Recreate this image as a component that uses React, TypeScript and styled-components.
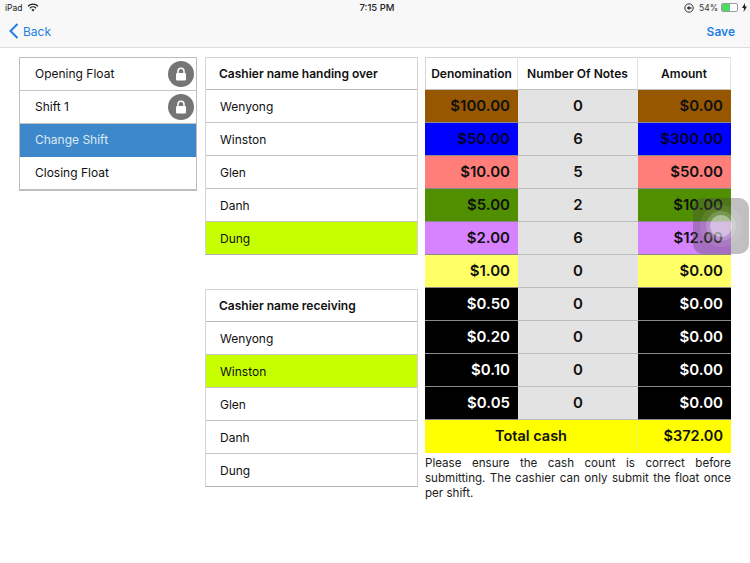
import React from 'react';
import styled, { createGlobalStyle } from 'styled-components';

const GlobalStyle = createGlobalStyle`
  html, body {
    margin: 0;
    padding: 0;
    background: #fff;
    font-family: Inter, "Liberation Sans", sans-serif;
    color: #111;
  }
`;

const denominations = [
  { value: '$100.00', notes: '0', amount: '$0.00', bg: '#975700', fg: '#111' },
  { value: '$50.00', notes: '6', amount: '$300.00', bg: '#0000ff', fg: '#00002e' },
  { value: '$10.00', notes: '5', amount: '$50.00', bg: '#ff7e79', fg: '#111' },
  { value: '$5.00', notes: '2', amount: '$10.00', bg: '#4f8f00', fg: '#111' },
  { value: '$2.00', notes: '6', amount: '$12.00', bg: '#d783ff', fg: '#111' },
  { value: '$1.00', notes: '0', amount: '$0.00', bg: '#ffff66', fg: '#111' },
  { value: '$0.50', notes: '0', amount: '$0.00', bg: '#000', fg: '#fff' },
  { value: '$0.20', notes: '0', amount: '$0.00', bg: '#000', fg: '#fff' },
  { value: '$0.10', notes: '0', amount: '$0.00', bg: '#000', fg: '#fff' },
  { value: '$0.05', notes: '0', amount: '$0.00', bg: '#000', fg: '#fff' },
];

const cashiers = ['Wenyong', 'Winston', 'Glen', 'Danh', 'Dung'];

const LockIcon = () => (
  <svg width="12" height="14" viewBox="0 0 12 14">
    <path d="M3 6.5 V4.2 A3 3 0 0 1 9 4.2 V6.5" fill="none" stroke="#fff" strokeWidth="1.5" />
    <rect x="1" y="6" width="10" height="7.5" rx="1.2" fill="#fff" />
  </svg>
);

const CashierList = ({ title, selected }: { title: string; selected: string }) => (
  <Div_List>
    <Div_ListTitle>{title}</Div_ListTitle>
    {cashiers.map((name) => (
      <Div_CashierRow key={name} $selected={name === selected}>
        {name}
      </Div_CashierRow>
    ))}
  </Div_List>
);

export default function App() {
  return (
    <Div_Page>
      <GlobalStyle />
      <Div_Header>
        <Div_Status>
          <Span_StatusSide>
            iPad
            <svg width="12" height="9" viewBox="0 0 12 9">
              <path d="M6 8.6 L4.4 6.8 A2.4 2.4 0 0 1 7.6 6.8 Z" fill="#222" />
              <path d="M2.9 5.2 A4.5 4.5 0 0 1 9.1 5.2" fill="none" stroke="#222" strokeWidth="1.2" />
              <path d="M1 3.2 A7.2 7.2 0 0 1 11 3.2" fill="none" stroke="#222" strokeWidth="1.2" />
            </svg>
          </Span_StatusSide>
          <Span_Time>7:15 PM</Span_Time>
          <Span_StatusSide>
            <svg width="10" height="10" viewBox="0 0 10 10">
              <circle cx="5" cy="5" r="4.2" fill="none" stroke="#333" strokeWidth="1" />
              <path d="M2.6 5 L5.4 2.8 V4.2 H7.6 V5.8 H5.4 V7.2 Z" fill="#333" />
            </svg>
            <Span_Percent>54%</Span_Percent>
            <Div_Battery>
              <Div_BatteryFill style={{ width: '54%' }} />
            </Div_Battery>
            <svg width="5" height="9" viewBox="0 0 5 9">
              <path d="M3 0 L0 5 H2 L1.6 9 L5 3.6 H3 Z" fill="#222" />
            </svg>
          </Span_StatusSide>
        </Div_Status>
        <Div_Nav>
          <Button_Nav type="button">
            <svg width="10" height="16" viewBox="0 0 10 16">
              <path d="M8.5 1 L1.5 8 L8.5 15" fill="none" stroke="#1f7fe6" strokeWidth="2" />
            </svg>
            <Span_BackLabel>Back</Span_BackLabel>
          </Button_Nav>
          <Button_Nav type="button" $bold>
            Save
          </Button_Nav>
        </Div_Nav>
      </Div_Header>

      <Div_Content>
        <Div_ShiftList>
          <Div_ShiftRow>
            Opening Float
            <Div_LockBadge>
              <LockIcon />
            </Div_LockBadge>
          </Div_ShiftRow>
          <Div_ShiftRow>
            Shift 1
            <Div_LockBadge>
              <LockIcon />
            </Div_LockBadge>
          </Div_ShiftRow>
          <Div_ShiftRow $active>Change Shift</Div_ShiftRow>
          <Div_ShiftRow>Closing Float</Div_ShiftRow>
        </Div_ShiftList>

        <Div_CashierColumn>
          <CashierList title="Cashier name handing over" selected="Dung" />
          <CashierList title="Cashier name receiving" selected="Winston" />
        </Div_CashierColumn>

        <Div_TableColumn>
          <Div_Table>
            <Div_HeadCell>Denomination</Div_HeadCell>
            <Div_HeadCell>Number Of Notes</Div_HeadCell>
            <Div_HeadCell>Amount</Div_HeadCell>
            {denominations.map((d) => (
              <React.Fragment key={d.value}>
                <Div_MoneyCell $bg={d.bg} $fg={d.fg}>{d.value}</Div_MoneyCell>
                <Div_NotesCell>{d.notes}</Div_NotesCell>
                <Div_MoneyCell $bg={d.bg} $fg={d.fg}>{d.amount}</Div_MoneyCell>
              </React.Fragment>
            ))}
            <Div_TotalLabel>Total cash</Div_TotalLabel>
            <Div_TotalValue>$372.00</Div_TotalValue>
          </Div_Table>
          <P_Note>
            Please ensure the cash count is correct before submitting. The cashier can only submit
            the float once per shift.
          </P_Note>
        </Div_TableColumn>
      </Div_Content>

      <Div_AssistiveTouch>
        <Div_TouchHalo>
          <Div_TouchRing>
            <Div_TouchDot />
          </Div_TouchRing>
        </Div_TouchHalo>
      </Div_AssistiveTouch>
    </Div_Page>
  );
}

const Div_Page = styled.div`
  position: relative;
  width: 750px;
  height: 563px;
  overflow: hidden;
  background: #fff;
`;

const Div_Header = styled.div`
  height: 47px;
  background: #f8f8f8;
  border-bottom: 1px solid #dcdcdc;
`;

const Div_Status = styled.div`
  height: 15px;
  padding: 0 3px 0 5px;
  display: grid;
  grid-template-columns: 1fr auto 1fr;
  align-items: center;
  font-size: 8.5px;
  color: #222;

  & > span:last-child {
    justify-content: flex-end;
  }
`;

const Span_StatusSide = styled.span`
  display: flex;
  align-items: center;
  gap: 5px;
`;

const Span_Time = styled.span`
  font-weight: 500;
  font-size: 9.5px;
  margin-left: 2px;
`;

const Span_Percent = styled.span`
  margin-right: -2px;
  color: #333;
`;

const Div_Battery = styled.div`
  width: 15px;
  height: 7px;
  border: 1px solid #999;
  border-radius: 2px;
  background: #fff;
  margin-right: -1px;
  overflow: hidden;
`;

const Div_BatteryFill = styled.div`
  height: 100%;
  background: #4cd964;
`;

const Div_Nav = styled.div`
  height: 32px;
  padding: 0 15px 0 9px;
  display: flex;
  justify-content: space-between;
  align-items: center;
`;

const Button_Nav = styled.button<{ $bold?: boolean }>`
  display: flex;
  align-items: center;
  border: none;
  background: none;
  padding: 0;
  color: #1f7fe6;
  font-family: inherit;
  font-size: 12px;
  font-weight: ${(p) => (p.$bold ? 600 : 400)};
`;

const Span_BackLabel = styled.span`
  margin-left: 4px;
`;

const Div_Content = styled.div`
  display: flex;
  align-items: flex-start;
  padding: 9px 19px 0;
`;

const Div_ShiftList = styled.div`
  width: 178px;
  box-sizing: border-box;
  border: 1px solid #bdbdbd;
  border-bottom-width: 2px;
`;

const Div_ShiftRow = styled.div<{ $active?: boolean }>`
  position: relative;
  box-sizing: border-box;
  height: 33px;
  padding: 0 0 2px 15px;
  display: flex;
  align-items: center;
  font-size: 12px;
  background: ${(p) => (p.$active ? '#3d88cb' : '#fff')};
  color: ${(p) => (p.$active ? '#dceaf6' : '#111')};
  border-bottom: 1px solid ${(p) => (p.$active ? '#3d88cb' : '#c4c4c4')};

  &:last-child {
    height: 32px;
    border-bottom: none;
  }
`;

const Div_LockBadge = styled.div`
  position: absolute;
  right: 2px;
  top: 3px;
  width: 26px;
  height: 26px;
  border-radius: 50%;
  background: #757575;
  display: flex;
  align-items: center;
  justify-content: center;
`;

const Div_CashierColumn = styled.div`
  width: 213px;
  margin-left: 8px;
  display: flex;
  flex-direction: column;
  gap: 34px;
`;

const Div_List = styled.div`
  border-left: 1px solid #d4d4d4;
  border-right: 1px solid #d4d4d4;
  border-bottom: 1px solid #b0b0b0;
`;

const Div_ListTitle = styled.div`
  box-sizing: border-box;
  height: 33px;
  padding-left: 13px;
  display: flex;
  align-items: center;
  font-size: 12px;
  font-weight: 600;
  border-top: 1px solid #d4d4d4;
  border-bottom: 1px solid #b8b8b8;
`;

const Div_CashierRow = styled.div<{ $selected?: boolean }>`
  box-sizing: border-box;
  height: 33px;
  padding-left: 14px;
  display: flex;
  align-items: center;
  font-size: 12px;
  background: ${(p) => (p.$selected ? '#c6ff00' : '#fff')};
  border-bottom: 1px solid #c4c4c4;

  &:last-child {
    height: 32px;
    border-bottom: none;
  }
`;

const Div_TableColumn = styled.div`
  width: 306px;
  margin-left: 7px;
`;

const Div_Table = styled.div`
  display: grid;
  grid-template-columns: 93px 120px 93px;
  grid-auto-rows: 33px;
`;

const Div_HeadCell = styled.div`
  box-sizing: border-box;
  display: flex;
  align-items: center;
  justify-content: center;
  font-size: 12px;
  font-weight: 600;
  white-space: nowrap;
  border-top: 1px solid #d4d4d4;
  border-right: 1px solid #e4e4e4;
  border-bottom: 1px solid #c0c0c0;

  &:first-child {
    border-left: 1px solid #d4d4d4;
  }
`;

const Div_MoneyCell = styled.div<{ $bg: string; $fg: string }>`
  box-sizing: border-box;
  display: flex;
  align-items: center;
  justify-content: flex-end;
  padding: 0 8px 2px 0;
  font-size: 15px;
  font-weight: 600;
  background: ${(p) => p.$bg};
  color: ${(p) => p.$fg};
  border-bottom: 1px solid #8a8a8a;
`;

const Div_NotesCell = styled.div`
  box-sizing: border-box;
  display: flex;
  align-items: center;
  justify-content: center;
  padding-bottom: 2px;
  font-size: 15px;
  font-weight: 600;
  background: #e3e3e3;
  border-bottom: 1px solid #bcbcbc;
`;

const Div_TotalLabel = styled.div`
  box-sizing: border-box;
  grid-column: span 2;
  display: flex;
  align-items: center;
  justify-content: center;
  padding-bottom: 2px;
  font-size: 14.5px;
  font-weight: 600;
  background: #ffff00;
  border-right: 1px solid #efef70;
`;

const Div_TotalValue = styled.div`
  box-sizing: border-box;
  display: flex;
  align-items: center;
  justify-content: flex-end;
  padding: 0 8px 2px 0;
  font-size: 14.5px;
  font-weight: 600;
  background: #ffff00;
`;

const P_Note = styled.p`
  margin: 3px 0 0;
  font-size: 11.6px;
  line-height: 15px;
  text-align: justify;
  color: #222;
`;

const Div_AssistiveTouch = styled.div`
  position: absolute;
  left: 693px;
  top: 198px;
  width: 56px;
  height: 56px;
  border-radius: 10px;
  background: rgba(70, 70, 70, 0.34);
  display: flex;
  align-items: center;
  justify-content: center;
`;

const Div_TouchHalo = styled.div`
  width: 42px;
  height: 42px;
  border-radius: 50%;
  background: rgba(255, 255, 255, 0.08);
  display: flex;
  align-items: center;
  justify-content: center;
`;

const Div_TouchRing = styled.div`
  width: 30px;
  height: 30px;
  border-radius: 50%;
  background: rgba(255, 255, 255, 0.18);
  display: flex;
  align-items: center;
  justify-content: center;
`;

const Div_TouchDot = styled.div`
  width: 22px;
  height: 22px;
  border-radius: 50%;
  background: rgba(255, 255, 255, 0.4);
`;
